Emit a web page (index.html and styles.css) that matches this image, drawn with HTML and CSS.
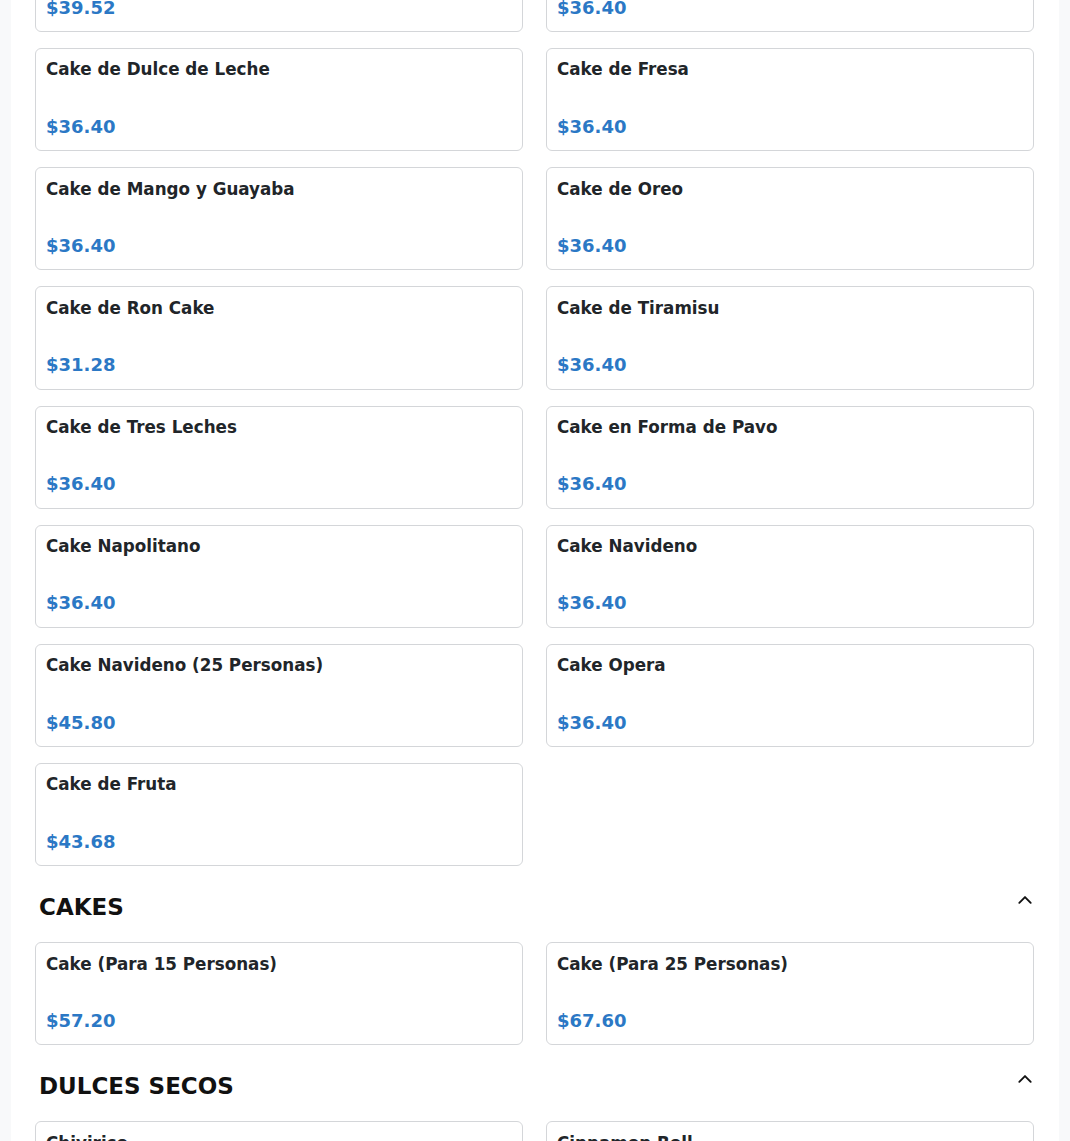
FILE: index.html
```html
<!DOCTYPE html>
<html lang="es">
<head>
<meta charset="utf-8">
<title>Menú</title>
<link rel="stylesheet" href="styles.css">
</head>
<body>
<main class="panel">
  <section class="section">
    <div class="grid">
      <div class="card"><div class="title">Cake de Chocolate</div><div class="price">$39.52</div></div>
      <div class="card"><div class="title">Cake de Coco</div><div class="price">$36.40</div></div>
      <div class="card"><div class="title">Cake de Dulce de Leche</div><div class="price">$36.40</div></div>
      <div class="card"><div class="title">Cake de Fresa</div><div class="price">$36.40</div></div>
      <div class="card"><div class="title">Cake de Mango y Guayaba</div><div class="price">$36.40</div></div>
      <div class="card"><div class="title">Cake de Oreo</div><div class="price">$36.40</div></div>
      <div class="card"><div class="title">Cake de Ron Cake</div><div class="price">$31.28</div></div>
      <div class="card"><div class="title">Cake de Tiramisu</div><div class="price">$36.40</div></div>
      <div class="card"><div class="title">Cake de Tres Leches</div><div class="price">$36.40</div></div>
      <div class="card"><div class="title">Cake en Forma de Pavo</div><div class="price">$36.40</div></div>
      <div class="card"><div class="title">Cake Napolitano</div><div class="price">$36.40</div></div>
      <div class="card"><div class="title">Cake Navideno</div><div class="price">$36.40</div></div>
      <div class="card"><div class="title">Cake Navideno (25 Personas)</div><div class="price">$45.80</div></div>
      <div class="card"><div class="title">Cake Opera</div><div class="price">$36.40</div></div>
      <div class="card"><div class="title">Cake de Fruta</div><div class="price">$43.68</div></div>
    </div>
  </section>

  <section class="section">
    <div class="section-header">
      <h2 class="section-title">CAKES</h2>
      <svg class="chevron" width="16" height="16" viewBox="0 0 16 16" aria-hidden="true"><polyline points="2.3,8.8 8,3.1 13.7,8.8" fill="none" stroke="currentColor" stroke-width="1.9" stroke-linecap="round" stroke-linejoin="round"/></svg>
    </div>
    <div class="grid">
      <div class="card"><div class="title">Cake (Para 15 Personas)</div><div class="price">$57.20</div></div>
      <div class="card"><div class="title">Cake (Para 25 Personas)</div><div class="price">$67.60</div></div>
    </div>
  </section>

  <section class="section">
    <div class="section-header">
      <h2 class="section-title">DULCES SECOS</h2>
      <svg class="chevron" width="16" height="16" viewBox="0 0 16 16" aria-hidden="true"><polyline points="2.3,8.8 8,3.1 13.7,8.8" fill="none" stroke="currentColor" stroke-width="1.9" stroke-linecap="round" stroke-linejoin="round"/></svg>
    </div>
    <div class="grid">
      <div class="card"><div class="title">Chivirico</div><div class="price">$2.00</div></div>
      <div class="card"><div class="title">Cinnamon Roll</div><div class="price">$3.00</div></div>
    </div>
  </section>
</main>
</body>
</html>
```

FILE: styles.css
```css
html, body {
  margin: 0;
  padding: 0;
}

body {
  background: #f8f9fa;
  font-family: "DejaVu Sans", "Liberation Sans", sans-serif;
  color: #212529;
  overflow: hidden;
}

.panel {
  margin: -71px 11px 0 11px;
  background: #ffffff;
  padding: 0 25px 40px 24px;
}

.section + .section {
  margin-top: 28px;
}

.grid {
  display: grid;
  grid-template-columns: 1fr 1fr;
  column-gap: 23px;
  row-gap: 16px;
}

.card {
  border: 1px solid #d4d6d9;
  border-radius: 6px;
  padding: 8.3px 10px 10.5px 10px;
  background: #fff;
}

.title {
  font-size: 16.75px;
  font-weight: bold;
  line-height: 24px;
  color: #212529;
  margin-bottom: 31.37px;
}

.price {
  font-size: 18px;
  font-weight: bold;
  line-height: 27px;
  color: #2b78c5;
}

.section-header {
  display: flex;
  justify-content: space-between;
  align-items: flex-start;
  padding: 0 1px 0 4px;
  margin-bottom: 20.4px;
}

.section-title {
  margin: 0;
  font-size: 23px;
  line-height: 27.6px;
  font-weight: bold;
  color: #111111;
}

.chevron {
  display: block;
  color: #111111;
}
```
